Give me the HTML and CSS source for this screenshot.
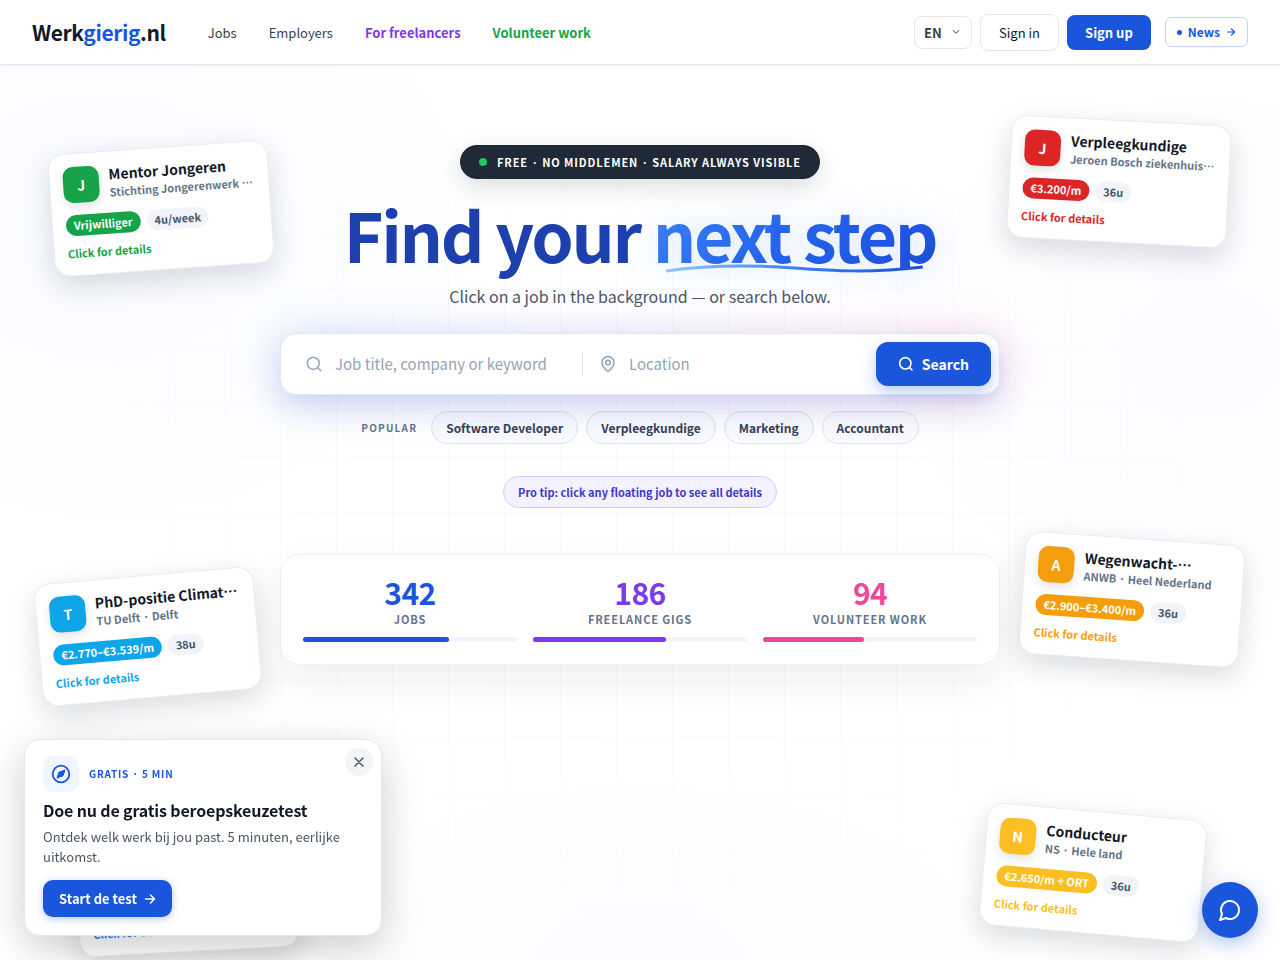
FILE: index.html
```html
<!DOCTYPE html>
<html lang="en">
<head>
    <meta charset="UTF-8">
    <meta name="viewport" content="width=device-width, initial-scale=1.0">
    <title>Werkgierig.nl</title>
    <link rel="stylesheet" href="styles.css">
</head>
<body>
    <header class="header">
        <a class="logo" href="#">Werk<span>gierig</span>.nl</a>
        <nav class="nav">
            <a href="#">Jobs</a>
            <a href="#">Employers</a>
            <a class="nav-freelance" href="#">For freelancers</a>
            <a class="nav-volunteer" href="#">Volunteer work</a>
        </nav>
        <div class="actions">
            <div class="lang">
                <select aria-label="Language">
                    <option>EN</option>
                    <option>NL</option>
                </select>
                <svg width="8" height="8" viewBox="0 0 8 8" fill="none" stroke="#374151" stroke-width="1" stroke-linecap="round" stroke-linejoin="round"><path d="M1.2 2.5 4 5.3l2.8-2.8"/></svg>
            </div>
            <a class="btn-signin" href="#">Sign in</a>
            <a class="btn-signup" href="#">Sign up</a>
            <a class="btn-news" href="#">
                <span class="news-dot"></span>News
                <svg width="10" height="10" viewBox="0 0 10 10" fill="none" stroke="currentColor" stroke-width="1.2" stroke-linecap="round" stroke-linejoin="round"><path d="M1.5 5h7M5.500 2l3 3-3 3"/></svg>
            </a>
        </div>
    </header>

    <main class="hero">
        <div class="grid-bg"></div>

        <a class="job job-mentor" href="#">
            <div class="job-top">
                <span class="job-icon">J</span>
                <div class="job-text">
                    <div class="job-title">Mentor Jongeren</div>
                    <div class="job-company">Stichting Jongerenwerk Utrecht</div>
                </div>
            </div>
            <div class="job-tags"><span class="tag-pay">Vrijwilliger</span><span class="tag-hours">4u/week</span></div>
            <div class="job-more">Click for details</div>
        </a>

        <a class="job job-nurse" href="#">
            <div class="job-top">
                <span class="job-icon">J</span>
                <div class="job-text">
                    <div class="job-title">Verpleegkundige</div>
                    <div class="job-company">Jeroen Bosch ziekenhuis Den Bosch</div>
                </div>
            </div>
            <div class="job-tags"><span class="tag-pay">€3.200/m</span><span class="tag-hours">36u</span></div>
            <div class="job-more">Click for details</div>
        </a>

        <a class="job job-phd" href="#">
            <div class="job-top">
                <span class="job-icon">T</span>
                <div class="job-text">
                    <div class="job-title">PhD-positie Climate Science</div>
                    <div class="job-company">TU Delft · Delft</div>
                </div>
            </div>
            <div class="job-tags"><span class="tag-pay">€2.770–€3.539/m</span><span class="tag-hours">38u</span></div>
            <div class="job-more">Click for details</div>
        </a>

        <a class="job job-anwb" href="#">
            <div class="job-top">
                <span class="job-icon">A</span>
                <div class="job-text">
                    <div class="job-title title-clamp">Wegenwacht-medewerker</div>
                    <div class="job-company">ANWB · Heel Nederland</div>
                </div>
            </div>
            <div class="job-tags"><span class="tag-pay">€2.900–€3.400/m</span><span class="tag-hours">36u</span></div>
            <div class="job-more">Click for details</div>
        </a>

        <a class="job job-ns" href="#">
            <div class="job-top">
                <span class="job-icon">N</span>
                <div class="job-text">
                    <div class="job-title">Conducteur</div>
                    <div class="job-company">NS · Hele land</div>
                </div>
            </div>
            <div class="job-tags"><span class="tag-pay">€2.650/m + ORT</span><span class="tag-hours">36u</span></div>
            <div class="job-more">Click for details</div>
        </a>

        <a class="job job-dev" href="#">
            <div class="job-more">Click for details</div>
        </a>

        <div class="content">
            <div class="badge"><span class="badge-dot"></span>FREE · NO MIDDLEMEN · SALARY ALWAYS VISIBLE</div>
            <h1>Find your <span class="accent"><span class="accent-text">next step</span><svg class="underline" viewBox="0 0 260 12" preserveAspectRatio="none" fill="none"><defs><linearGradient id="line" x1="0" x2="1" y1="0" y2="0"><stop offset="0" stop-color="#93c5fd"/><stop offset=".5" stop-color="#3b82f6"/><stop offset="1" stop-color="#1d4ed8"/></linearGradient></defs><path d="M2 9C50 2 90 3 130 6S205 11 258 5" stroke="url(#line)" stroke-width="3"/></svg></span></h1>
            <p class="subtitle">Click on a job in the background — or search below.</p>

            <div class="search-wrap">
                <form class="search">
                    <label class="field field-job">
                        <svg width="18" height="18" viewBox="0 0 24 24" fill="none" stroke="#94a3b8" stroke-width="2" stroke-linecap="round"><circle cx="11" cy="11" r="8"/><path d="m21 21-4.3-4.3"/></svg>
                        <input type="text" placeholder="Job title, company or keyword" aria-label="Job title, company or keyword">
                    </label>
                    <label class="field">
                        <svg width="18" height="18" viewBox="0 0 24 24" fill="none" stroke="#94a3b8" stroke-width="2" stroke-linejoin="round"><path d="M20 10c0 6-8 12-8 12s-8-6-8-12a8 8 0 0 1 16 0z"/><circle cx="12" cy="10" r="3"/></svg>
                        <input type="text" placeholder="Location" aria-label="Location">
                    </label>
                    <button type="button" class="btn-search">
                        <svg width="16" height="16" viewBox="0 0 24 24" fill="none" stroke="currentColor" stroke-width="2.400" stroke-linecap="round"><circle cx="11" cy="11" r="8.500"/><path d="m21 21-4-4"/></svg>
                        Search
                    </button>
                </form>
            </div>

            <div class="popular">
                <span class="popular-label">POPULAR</span>
                <a href="#">Software Developer</a>
                <a href="#">Verpleegkundige</a>
                <a href="#">Marketing</a>
                <a href="#">Accountant</a>
            </div>

            <div class="tip">Pro tip: click any floating job to see all details</div>

            <div class="stats">
                <div class="stat stat-jobs">
                    <div class="stat-number">342</div>
                    <div class="stat-label">JOBS</div>
                    <div class="bar"><div class="bar-fill" style="width: 68%"></div></div>
                </div>
                <div class="stat stat-gigs">
                    <div class="stat-number">186</div>
                    <div class="stat-label">FREELANCE GIGS</div>
                    <div class="bar"><div class="bar-fill" style="width: 62%"></div></div>
                </div>
                <div class="stat stat-volunteer">
                    <div class="stat-number">94</div>
                    <div class="stat-label">VOLUNTEER WORK</div>
                    <div class="bar"><div class="bar-fill" style="width: 47%"></div></div>
                </div>
            </div>
        </div>
    </main>

    <aside class="popup">
        <button class="popup-close" aria-label="Close">
            <svg width="10" height="10" viewBox="0 0 10 10" stroke="#4b5563" stroke-width="1.500" stroke-linecap="round"><path d="m1 1 8 8M9 1 1 9"/></svg>
        </button>
        <div class="popup-top">
            <span class="popup-icon">
                <svg width="20" height="20" viewBox="0 0 20 20" fill="none" stroke="#1a56db"><circle cx="10" cy="10" r="8.300" stroke-width="1.800"/><path d="M14 6 12 11.800 6 14 8 8.200z" fill="#1a56db" stroke-linejoin="round"/></svg>
            </span>
            <span class="popup-label">GRATIS · 5 MIN</span>
        </div>
        <h2>Doe nu de gratis beroepskeuzetest</h2>
        <p>Ontdek welk werk bij jou past. 5 minuten, eerlijke uitkomst.</p>
        <a class="btn-test" href="#">
            Start de test
            <svg width="12" height="12" viewBox="0 0 12 12" fill="none" stroke="currentColor" stroke-width="1.500" stroke-linecap="round" stroke-linejoin="round"><path d="M1.500 6h9M6.500 2l4 4-4 4"/></svg>
        </a>
    </aside>

    <button class="chat" aria-label="Open chat">
        <svg width="24" height="24" viewBox="0 0 24 24" fill="none" stroke="#fff" stroke-width="2" stroke-linecap="round" stroke-linejoin="round"><path d="M7.900 20A9 9 0 1 0 4 16.100L2 22z"/></svg>
    </button>
</body>
</html>
```
FILE: styles.css
```css
* {
    box-sizing: border-box;
}

body {
    margin: 0;
    background-color: #fff;
    color: #111827;
    font-family: "Noto Sans CJK JP", "Noto Sans", sans-serif;
    font-size: 13px;
    line-height: 20px;
}

a {
    color: inherit;
    text-decoration: none;
}

input, select, button {
    font-family: inherit;
}

svg {
    flex-shrink: 0;
}

/* header */
.header {
    display: flex;
    align-items: center;
    height: 65px;
    padding: 0 32px;
    background: #fff;
    border-bottom: 1px solid #e5e7eb;
    box-shadow: 0 1px 3px rgba(0, 0, 0, 0.05);
    position: relative;
    z-index: 5;
}

.logo {
    font-size: 21px;
    font-weight: 700;
    letter-spacing: -0.02em;
}

.logo span {
    color: #1a56db;
}

.nav {
    display: flex;
    gap: 32px;
    margin-left: 42px;
    color: #374151;
    line-height: 21px;
}

.nav-freelance {
    color: #7c3aed;
    font-weight: 700;
}

.nav-volunteer {
    color: #16a34a;
    font-weight: 700;
}

.actions {
    display: flex;
    align-items: center;
    gap: 8px;
    margin-left: auto;
}

.lang {
    position: relative;
}

.lang select {
    appearance: none;
    width: 58px;
    height: 33px;
    padding: 0 9px;
    border: 1px solid #e5e7eb;
    border-radius: 8px;
    background: #fff;
    color: #374151;
    font-size: 13px;
    font-weight: 700;
}

.lang svg {
    position: absolute;
    right: 12px;
    top: 12px;
    pointer-events: none;
}

.btn-signin {
    padding: 8px 18px;
    border: 1px solid #e5e7eb;
    border-radius: 8px;
    line-height: 19px;
}

.btn-signup {
    padding: 8px 18px;
    border-radius: 8px;
    background: #1a56db;
    color: #fff;
    font-weight: 700;
    line-height: 19px;
}

.btn-news {
    display: flex;
    align-items: center;
    gap: 6px;
    height: 30px;
    margin-left: 6px;
    padding: 0 11px;
    border: 1px solid #bfd3f7;
    border-radius: 6px;
    color: #1a56db;
    font-size: 12px;
    font-weight: 700;
}

.news-dot {
    width: 5px;
    height: 5px;
    border-radius: 50%;
    background: #1a56db;
}

/* hero */
.hero {
    position: relative;
    min-height: calc(100vh - 65px);
    padding: 80px 24px;
    overflow: hidden;
    background:
        radial-gradient(ellipse 600px 480px at 8% 18%, rgba(59, 130, 246, 0.04), transparent 70%),
        radial-gradient(ellipse 500px 420px at 94% 32%, rgba(139, 92, 246, 0.03), transparent 70%),
        radial-gradient(ellipse 600px 300px at 50% 100%, rgba(59, 130, 246, 0.03), transparent 70%),
        #fff;
}

.grid-bg {
    position: absolute;
    inset: 0;
    background-image:
        linear-gradient(rgba(26, 86, 219, 0.04) 1px, transparent 1px),
        linear-gradient(90deg, rgba(26, 86, 219, 0.04) 1px, transparent 1px);
    background-size: 56px 56px;
    mask-image: radial-gradient(ellipse at center, #000 30%, transparent 65%);
}

.content {
    position: relative;
    display: flex;
    flex-direction: column;
    align-items: center;
    max-width: 720px;
    margin: 0 auto;
}

.badge {
    display: flex;
    align-items: center;
    gap: 10px;
    height: 34px;
    padding: 0 19px;
    border-radius: 17px;
    background: #1f2937;
    color: #fff;
    font-size: 11px;
    font-weight: 700;
    letter-spacing: 0.08em;
    box-shadow: 0 8px 24px rgba(15, 23, 42, 0.14);
}

.badge-dot {
    width: 8px;
    height: 8px;
    border-radius: 50%;
    background: #22c55e;
}

h1 {
    margin: 21px 0 0;
    color: #1e40af;
    font-size: 68px;
    font-weight: 700;
    line-height: 68px;
    letter-spacing: -0.035em;
    white-space: nowrap;
}

.accent {
    display: inline-block;
    position: relative;
}

.accent-text {
    display: inline-block;
    background: linear-gradient(135deg, #3b82f6, #2563eb 50%, #1d4ed8);
    background-clip: text;
    -webkit-background-clip: text;
    color: transparent;
    filter: drop-shadow(0 4px 20px rgba(59, 130, 246, 0.25));
}

.underline {
    position: absolute;
    left: 4%;
    bottom: -6px;
    width: 92%;
    height: 12px;
}

.subtitle {
    margin: 14px 0 0;
    color: #4b5563;
    font-size: 16px;
    line-height: 28px;
}

.search-wrap {
    position: relative;
    width: 100%;
    margin-top: 23px;
}

/* coloured glow behind the search bar */
.search-wrap::before {
    content: "";
    position: absolute;
    inset: -4px;
    border-radius: 24px;
    background: linear-gradient(90deg, #3b82f6, #8b5cf6 50%, #ec4899);
    filter: blur(24px);
    opacity: 0.15;
}

.search {
    position: relative;
    display: flex;
    align-items: center;
    height: 62px;
    padding: 8px;
    border: 1px solid #e2e8f0;
    border-radius: 16px;
    background: #fff;
    box-shadow: 0 12px 32px rgba(30, 64, 175, 0.16);
}

.field {
    display: flex;
    flex: 1;
    align-items: center;
    gap: 12px;
    min-width: 0;
    padding: 0 16px;
}

.field-job {
    flex: 0 0 294px;
    height: 24px;
    border-right: 1px solid #e5e7eb;
}

.field input {
    width: 100%;
    min-width: 0;
    padding: 0;
    border: none;
    outline: none;
    background: none;
    color: #111827;
    font-size: 15px;
    line-height: 24px;
}

.field input::placeholder {
    color: #94a3b8;
}

.btn-search {
    display: flex;
    align-items: center;
    gap: 8px;
    height: 44px;
    padding: 0 22px;
    border: none;
    border-radius: 12px;
    background: #1a56db;
    color: #fff;
    font-size: 14px;
    font-weight: 700;
    cursor: pointer;
    box-shadow: 0 6px 16px rgba(26, 86, 219, 0.3);
}

.popular {
    display: flex;
    align-items: center;
    justify-content: center;
    flex-wrap: wrap;
    gap: 8px;
    margin-top: 16px;
}

.popular-label {
    margin-right: 6px;
    color: #64748b;
    font-size: 10px;
    font-weight: 700;
    letter-spacing: 0.12em;
}

.popular a {
    padding: 5px 14px;
    border: 1px solid #dbe3ee;
    border-radius: 17px;
    background: rgba(248, 250, 255, 0.8);
    color: #334155;
    font-size: 12px;
    font-weight: 700;
    line-height: 21px;
}

.tip {
    margin-top: 32px;
    padding: 5px 14px;
    border: 1px solid #d4cffa;
    border-radius: 16px;
    background: #f3f2fe;
    color: #4338ca;
    font-size: 11px;
    font-weight: 700;
}

.stats {
    display: grid;
    grid-template-columns: repeat(3, 1fr);
    gap: 16px;
    width: 100%;
    margin-top: 46px;
    padding: 22px;
    border: 1px solid #eef2f6;
    border-radius: 20px;
    background: #fff;
    box-shadow: 0 16px 40px rgba(15, 23, 42, 0.07);
}

.stat {
    text-align: center;
}

.stat-number {
    font-size: 30px;
    font-weight: 700;
    line-height: 30px;
    letter-spacing: -0.02em;
}

.stat-label {
    margin: 3px 0 9px;
    color: #64748b;
    font-size: 11px;
    font-weight: 700;
    line-height: 18px;
    letter-spacing: 0.08em;
}

.bar {
    height: 5px;
    border-radius: 3px;
    background: #f1f5f9;
}

.bar-fill {
    height: 100%;
    border-radius: 3px;
    background: currentColor;
}

.stat-jobs {
    color: #1a56db;
}

.stat-gigs {
    color: #7c3aed;
}

.stat-volunteer {
    color: #ec4899;
}

/* floating jobs */
.job {
    position: absolute;
    display: flex;
    flex-direction: column;
    justify-content: flex-end;
    width: 220px;
    min-height: 123px;
    padding: 13px;
    border: 1px solid #e9edf3;
    border-radius: 16px;
    background: #fff;
    box-shadow: 0 10px 28px rgba(15, 23, 42, 0.15);
}

.job-top {
    display: flex;
    align-items: center;
    gap: 10px;
}

.job-icon {
    display: flex;
    align-items: center;
    justify-content: center;
    flex-shrink: 0;
    width: 36px;
    height: 36px;
    border-radius: 10px;
    background: var(--color);
    color: #fff;
    font-size: 14px;
    font-weight: 700;
    box-shadow: 0 4px 10px rgba(15, 23, 42, 0.12);
}

.job-text {
    min-width: 0;
    font-weight: 700;
    line-height: 18px;
}

.job-title, .job-company {
    overflow: hidden;
    text-overflow: ellipsis;
    white-space: nowrap;
}

.job-title {
    font-size: 14px;
}

.title-clamp {
    display: -webkit-box;
    -webkit-box-orient: vertical;
    -webkit-line-clamp: 1;
    white-space: normal;
}

.job-company {
    color: #64748b;
    font-size: 11px;
}

.job-tags {
    display: flex;
    gap: 6px;
    margin-top: 12px;
    font-size: 11px;
    font-weight: 700;
    line-height: 21px;
}

.tag-pay, .tag-hours {
    padding: 0 8px;
    border-radius: 11px;
}

.tag-pay {
    background: var(--color);
    color: #fff;
}

.tag-hours {
    background: #f1f5f9;
    color: #475569;
}

.job-more {
    margin-top: 8px;
    color: var(--color);
    font-size: 11px;
    font-weight: 700;
    line-height: 18px;
}

.job-mentor {
    --color: #16a34a;
    left: 4%;
    top: 82px;
    transform: rotate(-4deg);
}

.job-nurse {
    --color: #dc2626;
    right: 4%;
    top: 55px;
    transform: rotate(3deg);
}

.job-phd {
    --color: #0ea5e9;
    left: 3%;
    top: 510px;
    transform: rotate(-5deg);
}

.job-anwb {
    --color: #f59e0b;
    right: 3%;
    top: 473px;
    transform: rotate(4deg);
}

.job-ns {
    --color: #fbbf24;
    right: 6%;
    bottom: 26px;
    transform: rotate(5deg);
}

.job-dev {
    --color: #3b82f6;
    left: 6%;
    bottom: 8px;
    transform: rotate(-3deg);
}

/* career test popup */
.popup {
    position: fixed;
    left: 24px;
    bottom: 24px;
    z-index: 10;
    width: 358px;
    padding: 16px 18px 18px;
    border: 1px solid #e5e7eb;
    border-radius: 16px;
    background: #fff;
    box-shadow: 0 12px 40px rgba(0, 0, 0, 0.2);
}

.popup-close {
    position: absolute;
    top: 8px;
    right: 8px;
    display: flex;
    align-items: center;
    justify-content: center;
    width: 28px;
    height: 28px;
    padding: 0;
    border: none;
    border-radius: 50%;
    background: #f3f4f6;
    cursor: pointer;
}

.popup-top {
    display: flex;
    align-items: center;
    gap: 10px;
}

.popup-icon {
    display: flex;
    align-items: center;
    justify-content: center;
    width: 36px;
    height: 36px;
    border-radius: 10px;
    background: #eff6ff;
}

.popup-label {
    color: #1a56db;
    font-size: 10px;
    font-weight: 700;
    letter-spacing: 0.08em;
}

.popup h2 {
    margin: 6px 0 5px;
    font-size: 16px;
    line-height: 24px;
    letter-spacing: -0.01em;
}

.popup p {
    margin: 0 0 13px;
    color: #4b5563;
}

.btn-test {
    display: inline-flex;
    align-items: center;
    gap: 7px;
    height: 37px;
    padding: 0 16px;
    border-radius: 10px;
    background: #1a56db;
    color: #fff;
    font-weight: 700;
    box-shadow: 0 2px 8px rgba(26, 86, 219, 0.3);
}

.chat {
    position: fixed;
    right: 22px;
    bottom: 22px;
    z-index: 10;
    display: flex;
    align-items: center;
    justify-content: center;
    width: 56px;
    height: 56px;
    padding: 0;
    border: none;
    border-radius: 50%;
    background: #1a56db;
    box-shadow: 0 6px 20px rgba(26, 86, 219, 0.35);
    cursor: pointer;
}
```
